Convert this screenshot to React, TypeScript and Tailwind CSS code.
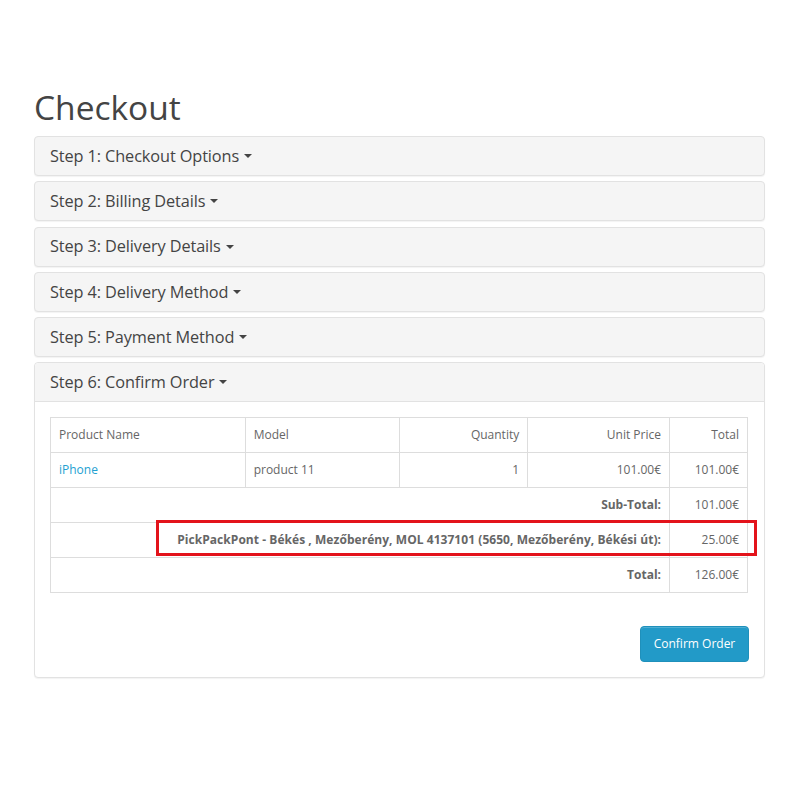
import React from "react";

const Caret = () => (
  <span className="ml-[5px] inline-block h-0 w-0 border-x-[4px] border-t-[4px] border-x-transparent border-t-[#444] align-middle" />
);

const steps = [
  "Step 1: Checkout Options",
  "Step 2: Billing Details",
  "Step 3: Delivery Details",
  "Step 4: Delivery Method",
  "Step 5: Payment Method",
];

export default function App() {
  return (
    <div
      className="min-h-[800px] w-[800px] bg-white pt-[87px] pl-[34px] text-[#444]"
      style={{ fontFamily: "'Open Sans', 'Noto Sans', sans-serif" }}
    >
      <div className="w-[731px]">
        <h1 className="mb-[8px] text-[33.5px] leading-[41px] font-normal text-[#444]">Checkout</h1>
        <div className="flex flex-col gap-[5.3px]">
          {steps.map((s) => (
            <div key={s} className="rounded-[4px] border border-[#e2e2e2] bg-[#f5f5f5] shadow-[0_1px_1px_rgba(0,0,0,0.05)]">
              <div className="flex h-[38px] items-center px-[15px] text-[16.3px] tracking-[-0.1px] text-[#444]">
                {s}
                <Caret />
              </div>
            </div>
          ))}
          <div className="rounded-[4px] border border-[#e2e2e2] bg-white shadow-[0_1px_1px_rgba(0,0,0,0.05)]">
            <div className="flex h-[39px] items-center rounded-t-[4px] border-b border-[#e2e2e2] bg-[#f5f5f5] px-[15px] text-[16.3px] tracking-[-0.1px] text-[#444]">
              Step 6: Confirm Order
              <Caret />
            </div>
            <div className="p-[15px] pt-[15px]">
              <div className="relative">
                <table className="w-[698px] border-collapse text-[12px] text-[#666]">
                  <tbody>
                    <tr className="h-[35px]">
                      <td className="w-[195px] border border-[#ddd] px-[8px]">Product Name</td>
                      <td className="w-[155px] border border-[#ddd] px-[8px]">Model</td>
                      <td className="w-[128px] border border-[#ddd] px-[8px] text-right">Quantity</td>
                      <td className="w-[142px] border border-[#ddd] px-[8px] text-right">Unit Price</td>
                      <td className="w-[78px] border border-[#ddd] px-[8px] text-right">Total</td>
                    </tr>
                    <tr className="h-[35px]">
                      <td className="border border-[#ddd] px-[8px] text-[#23a1d1]">iPhone</td>
                      <td className="border border-[#ddd] px-[8px]">product 11</td>
                      <td className="border border-[#ddd] px-[8px] text-right">1</td>
                      <td className="border border-[#ddd] px-[8px] text-right">101.00€</td>
                      <td className="border border-[#ddd] px-[8px] text-right">101.00€</td>
                    </tr>
                    <tr className="h-[35px]">
                      <td colSpan={4} className="border border-[#ddd] px-[8px] text-right font-bold">Sub-Total:</td>
                      <td className="border border-[#ddd] px-[8px] text-right">101.00€</td>
                    </tr>
                    <tr className="h-[35px]">
                      <td colSpan={4} className="border border-[#ddd] px-[8px] text-right font-bold tracking-[0.05px]">
                        PickPackPont - Békés , Mezőberény, MOL 4137101 (5650, Mezőberény, Békési út):
                      </td>
                      <td className="border border-[#ddd] px-[8px] text-right">25.00€</td>
                    </tr>
                    <tr className="h-[35px]">
                      <td colSpan={4} className="border border-[#ddd] px-[8px] text-right font-bold">Total:</td>
                      <td className="border border-[#ddd] px-[8px] text-right">126.00€</td>
                    </tr>
                  </tbody>
                </table>
                <div className="pointer-events-none absolute top-[103px] left-[106px] h-[36px] w-[601px] border-[3px] border-[#e3131b]" />
              </div>
              <div className="mt-[33px] flex justify-end">
                <button className="h-[36px] w-[109px] rounded-[4px] border border-[#1f90bb] bg-[#229ac8] text-[12px] text-white shadow-[inset_0_1px_0_rgba(255,255,255,0.2)]">
                  Confirm Order
                </button>
              </div>
            </div>
          </div>
        </div>
      </div>
    </div>
  );
}
